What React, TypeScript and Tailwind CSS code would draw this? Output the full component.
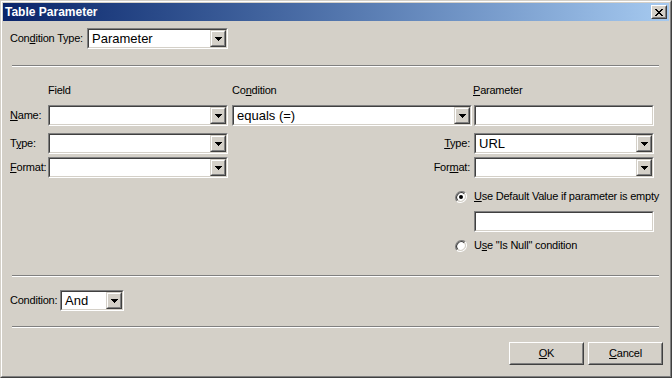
import React from "react";

const font = "font-['Liberation_Sans',Arial,sans-serif]";

function Arrow() {
  return (
    <svg width="7" height="4" viewBox="0 0 7 4" className="block">
      <path d="M0 0H7L3.5 4Z" fill="#000" shapeRendering="crispEdges" />
    </svg>
  );
}

function Combo({ className, value }: { className: string; value?: string }) {
  return (
    <div className={`h-[21px] border border-t-[#808080] border-l-[#808080] border-b-white border-r-white ${className}`}>
      <div className="h-full flex border border-t-[#404040] border-l-[#404040] border-b-[#d4d0c8] border-r-[#d4d0c8] bg-white">
        <div className="flex-1 flex items-center pl-[3px] text-[13px] tracking-normal leading-none text-black overflow-hidden whitespace-nowrap">
          {value}
        </div>
        <div className="w-[16px] h-full border border-t-[#d4d0c8] border-l-[#d4d0c8] border-b-[#404040] border-r-[#404040]">
          <div className="h-full flex items-center justify-center bg-[#d4d0c8] border border-t-white border-l-white border-b-[#808080] border-r-[#808080]">
            <Arrow />
          </div>
        </div>
      </div>
    </div>
  );
}

function Field({ className }: { className: string }) {
  return (
    <div className={`h-[21px] border border-t-[#808080] border-l-[#808080] border-b-white border-r-white ${className}`}>
      <div className="h-full border border-t-[#404040] border-l-[#404040] border-b-[#d4d0c8] border-r-[#d4d0c8] bg-white" />
    </div>
  );
}

function Radio({ checked }: { checked?: boolean }) {
  return (
    <svg width="12" height="12" viewBox="0 0 12 12" className="block">
      <path d="M1.8 10.2A6 6 0 0 1 10.2 1.8" stroke="#808080" strokeWidth="1.2" fill="none" />
      <path d="M1.8 10.2A6 6 0 0 0 10.2 1.8" stroke="#ffffff" strokeWidth="1.2" fill="none" />
      <circle cx="6" cy="6" r="4.6" fill="#fff" />
      <path d="M2.7 9.3A4.7 4.7 0 0 1 9.3 2.7" stroke="#404040" strokeWidth="1.1" fill="none" />
      <path d="M2.7 9.3A4.7 4.7 0 0 0 9.3 2.7" stroke="#d4d0c8" strokeWidth="1.1" fill="none" />
      {checked && <circle cx="6" cy="6" r="2" fill="#000" />}
    </svg>
  );
}

function Sep({ className = "" }: { className?: string }) {
  return <div className={`ml-[9px] w-[647px] h-[2px] border-t border-b border-t-[#808080] border-b-white ${className}`} />;
}

function Btn({ children }: { children: React.ReactNode }) {
  return (
    <div className="w-[75px] h-[23px] border border-t-white border-l-white border-b-[#404040] border-r-[#404040]">
      <div className="h-full flex items-center justify-center bg-[#d4d0c8] border border-t-[#d4d0c8] border-l-[#d4d0c8] border-b-[#808080] border-r-[#808080] text-[11px] text-black">
        {children}
      </div>
    </div>
  );
}

export default function App() {
  return (
    <div className={`w-[672px] h-[378px] bg-[#d4d0c8] border border-t-[#d4d0c8] border-l-[#d4d0c8] border-b-[#404040] border-r-[#404040] ${font} text-[11px] tracking-[-0.22px] text-black leading-[13px]`}>
      <div className="h-full flex flex-col p-px border border-t-white border-l-white border-b-[#808080] border-r-[#808080]">
        {/* Title bar */}
        <div className="h-[18px] flex items-center bg-linear-to-r from-[#0a246a] to-[#a6caf0] pl-[2px] pr-[2px]">
          <span className="text-white font-bold text-[12px] tracking-normal leading-none">Table Parameter</span>
          <div className="ml-auto w-[16px] h-[14px] border border-t-white border-l-white border-b-[#404040] border-r-[#404040]">
            <div className="h-full flex items-center justify-center bg-[#d4d0c8] border border-t-[#d4d0c8] border-l-[#d4d0c8] border-b-[#808080] border-r-[#808080]">
              <svg width="8" height="7" viewBox="0 0 8 7" className="block" shapeRendering="crispEdges">
                <path d="M0 0h2v1h-2zM6 0h2v1h-2zM1 1h2v1h-2zM5 1h2v1h-2zM2 2h4v1h-4zM3 3h2v1h-2zM2 4h4v1h-4zM1 5h2v1h-2zM5 5h2v1h-2zM0 6h2v1h-2zM6 6h2v1h-2z" fill="#000" />
              </svg>
            </div>
          </div>
        </div>

        {/* Body */}
        <div className="flex-1 flex flex-col mt-px">
          <div className="mt-[6px] flex items-center pl-[7px]">
            <span className="w-[77px]">Con<u>d</u>ition Type:</span>
            <Combo className="w-[141px]" value="Parameter" />
          </div>

          <Sep className="mt-[16px]" />

          <div className="mt-[17px] h-[13px] flex pl-[45px]">
            <span className="w-[184px]">Field</span>
            <span className="w-[241px]">Co<u>n</u>dition</span>
            <span><u>P</u>arameter</span>
          </div>

          <div className="mt-[8px] flex items-center pl-[7px]">
            <span className="w-[38px]"><u>N</u>ame:</span>
            <Combo className="w-[180px]" />
            <Combo className="w-[240px] ml-[4px]" value="equals (=)" />
            <Field className="w-[180px] ml-[2px]" />
          </div>

          <div className="mt-[7px] flex items-center pl-[7px]">
            <span className="w-[38px]">T<u>y</u>pe:</span>
            <Combo className="w-[180px]" />
            <span className="w-[246px] text-right pr-[4px]"><u>T</u>ype:</span>
            <Combo className="w-[180px]" value="URL" />
          </div>

          <div className="mt-[3px] flex items-center pl-[7px]">
            <span className="w-[38px]"><u>F</u>ormat:</span>
            <Combo className="w-[180px]" />
            <span className="w-[246px] text-right pr-[4px]">For<u>m</u>at:</span>
            <Combo className="w-[180px]" />
          </div>

          <div className="mt-[12px] h-[13px] flex items-center ml-[452px]">
            <Radio checked />
            <span className="ml-[7px]"><u>U</u>se Default Value if parameter is empty</span>
          </div>

          <Field className="mt-[8px] ml-[471px] w-[180px]" />

          <div className="mt-[7px] h-[13px] flex items-center ml-[452px]">
            <Radio />
            <span className="ml-[7px]">U<u>s</u>e "Is Null" condition</span>
          </div>

          <Sep className="mt-[23px]" />

          <div className="mt-[13px] flex items-center pl-[7px]">
            <span className="w-[50px]">Condition:</span>
            <Combo className="w-[64px]" value="And" />
          </div>

          <Sep className="mt-[15px]" />

          <div className="mt-[14px] flex gap-[4px] ml-[506px]">
            <Btn><u>O</u>K</Btn>
            <Btn><u>C</u>ancel</Btn>
          </div>
        </div>
      </div>
    </div>
  );
}
